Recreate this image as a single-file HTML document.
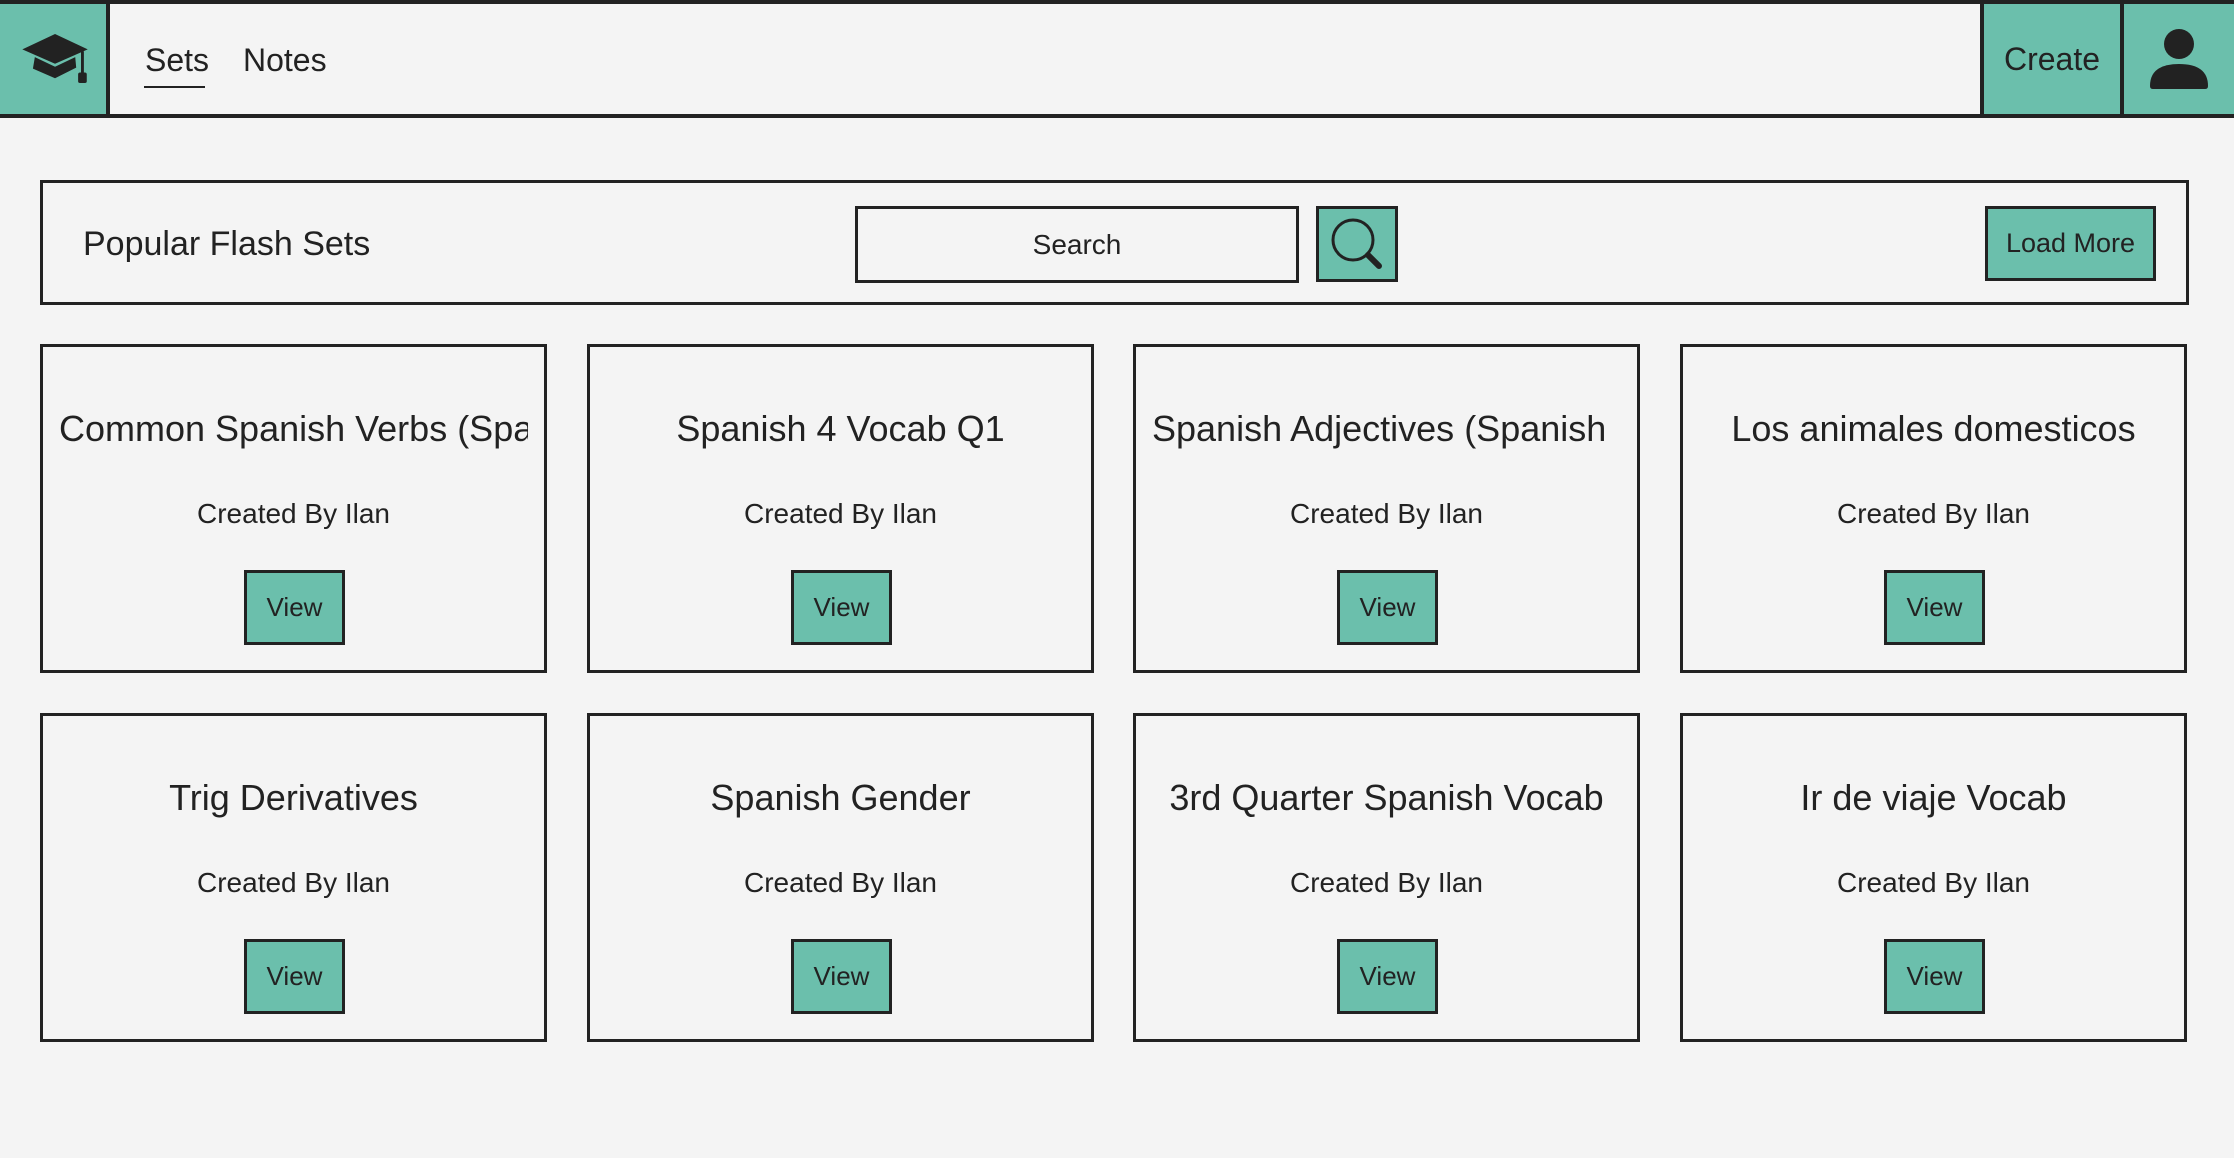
<!DOCTYPE html>
<html><head><meta charset="utf-8"><style>
*{box-sizing:border-box;margin:0;padding:0}
body{width:2234px;height:1158px;background:#f4f4f4;position:relative;overflow:hidden;font-family:"Liberation Sans",sans-serif;color:#222}
.abs{position:absolute}
.nav{left:0;top:0;width:2234px;height:118px;border-top:4px solid #222;border-bottom:4px solid #222}
.teal{background:#6bbfac}
.card{position:absolute;width:507px;height:329px;border:3px solid #222}
.card .t{position:absolute;left:16px;right:16px;top:60px;font-size:36px;white-space:nowrap;overflow:hidden;text-align:center;line-height:44px}
.card .c{position:absolute;left:0;right:0;top:150px;font-size:28px;text-align:center;line-height:34px}
.card .v{position:absolute;left:201px;top:223px;width:101px;height:75px;border:3px solid #222;background:#6bbfac;font-size:26px;text-align:center;line-height:69px}
</style></head><body>
<div class="abs nav"></div>
<div class="abs teal" style="left:0;top:4px;width:110px;height:110px;border-right:4px solid #222"></div>
<svg class="abs" style="left:20px;top:34px" width="72" height="50" viewBox="0 0 72 52">
<path d="M35 0 L69 16 L35 31 L1 16 Z" fill="#222"/>
<path d="M14 24 L35 34 L56 24 L57 35 L35 46 L12 36 Z" fill="#222"/>
<rect x="62" y="18" width="3" height="24" fill="#222"/>
<rect x="59" y="40" width="9" height="11" rx="2" fill="#222"/>
</svg>
<div class="abs" style="left:145px;top:41px;font-size:32px;line-height:38px">Sets</div>
<div class="abs" style="left:144px;top:86px;width:61px;height:2px;background:#222"></div>
<div class="abs" style="left:243px;top:41px;font-size:32px;line-height:38px">Notes</div>
<div class="abs teal" style="left:1980px;top:4px;width:144px;height:110px;border-left:4px solid #222;border-right:4px solid #222;font-size:32px;text-align:center;line-height:110px">Create</div>
<div class="abs teal" style="left:2124px;top:4px;width:110px;height:110px"></div>
<svg class="abs" style="left:2148px;top:28px" width="62" height="62" viewBox="0 0 62 62">
<circle cx="31" cy="16" r="15" fill="#222"/>
<path d="M2 58 Q2 36 31 36 Q60 36 60 58 Q60 61 57 61 L5 61 Q2 61 2 58Z" fill="#222"/>
</svg>

<div class="abs" style="left:40px;top:180px;width:2149px;height:125px;border:3px solid #222"></div>
<div class="abs" style="left:83px;top:224px;font-size:34px;line-height:40px">Popular Flash Sets</div>
<div class="abs" style="left:855px;top:206px;width:444px;height:77px;border:3px solid #222;font-size:28px;text-align:center;line-height:71px">Search</div>
<div class="abs teal" style="left:1316px;top:206px;width:82px;height:76px;border:3px solid #222"></div>
<svg class="abs" style="left:1316px;top:206px" width="82" height="76" viewBox="0 0 82 76">
<circle cx="37" cy="34" r="20" fill="none" stroke="#222" stroke-width="3"/>
<line x1="52" y1="49" x2="63" y2="60" stroke="#222" stroke-width="6" stroke-linecap="round"/>
</svg>
<div class="abs teal" style="left:1985px;top:206px;width:171px;height:75px;border:3px solid #222;font-size:27px;text-align:center;line-height:69px">Load More</div>

<div class="card" style="left:40px;top:344px"><div class="t" style="text-align:left">Common Spanish Verbs (Spanish - English)</div><div class="c">Created By Ilan</div><div class="v">View</div></div>
<div class="card" style="left:587px;top:344px"><div class="t">Spanish 4 Vocab Q1</div><div class="c">Created By Ilan</div><div class="v">View</div></div>
<div class="card" style="left:1133px;top:344px"><div class="t" style="text-align:left">Spanish Adjectives (Spanish&nbsp;&nbsp;&nbsp;&nbsp;&nbsp;&nbsp;English)</div><div class="c">Created By Ilan</div><div class="v">View</div></div>
<div class="card" style="left:1680px;top:344px"><div class="t">Los animales domesticos</div><div class="c">Created By Ilan</div><div class="v">View</div></div>
<div class="card" style="left:40px;top:713px"><div class="t">Trig Derivatives</div><div class="c">Created By Ilan</div><div class="v">View</div></div>
<div class="card" style="left:587px;top:713px"><div class="t">Spanish Gender</div><div class="c">Created By Ilan</div><div class="v">View</div></div>
<div class="card" style="left:1133px;top:713px"><div class="t">3rd Quarter Spanish Vocab</div><div class="c">Created By Ilan</div><div class="v">View</div></div>
<div class="card" style="left:1680px;top:713px"><div class="t">Ir de viaje Vocab</div><div class="c">Created By Ilan</div><div class="v">View</div></div>
</body></html>
